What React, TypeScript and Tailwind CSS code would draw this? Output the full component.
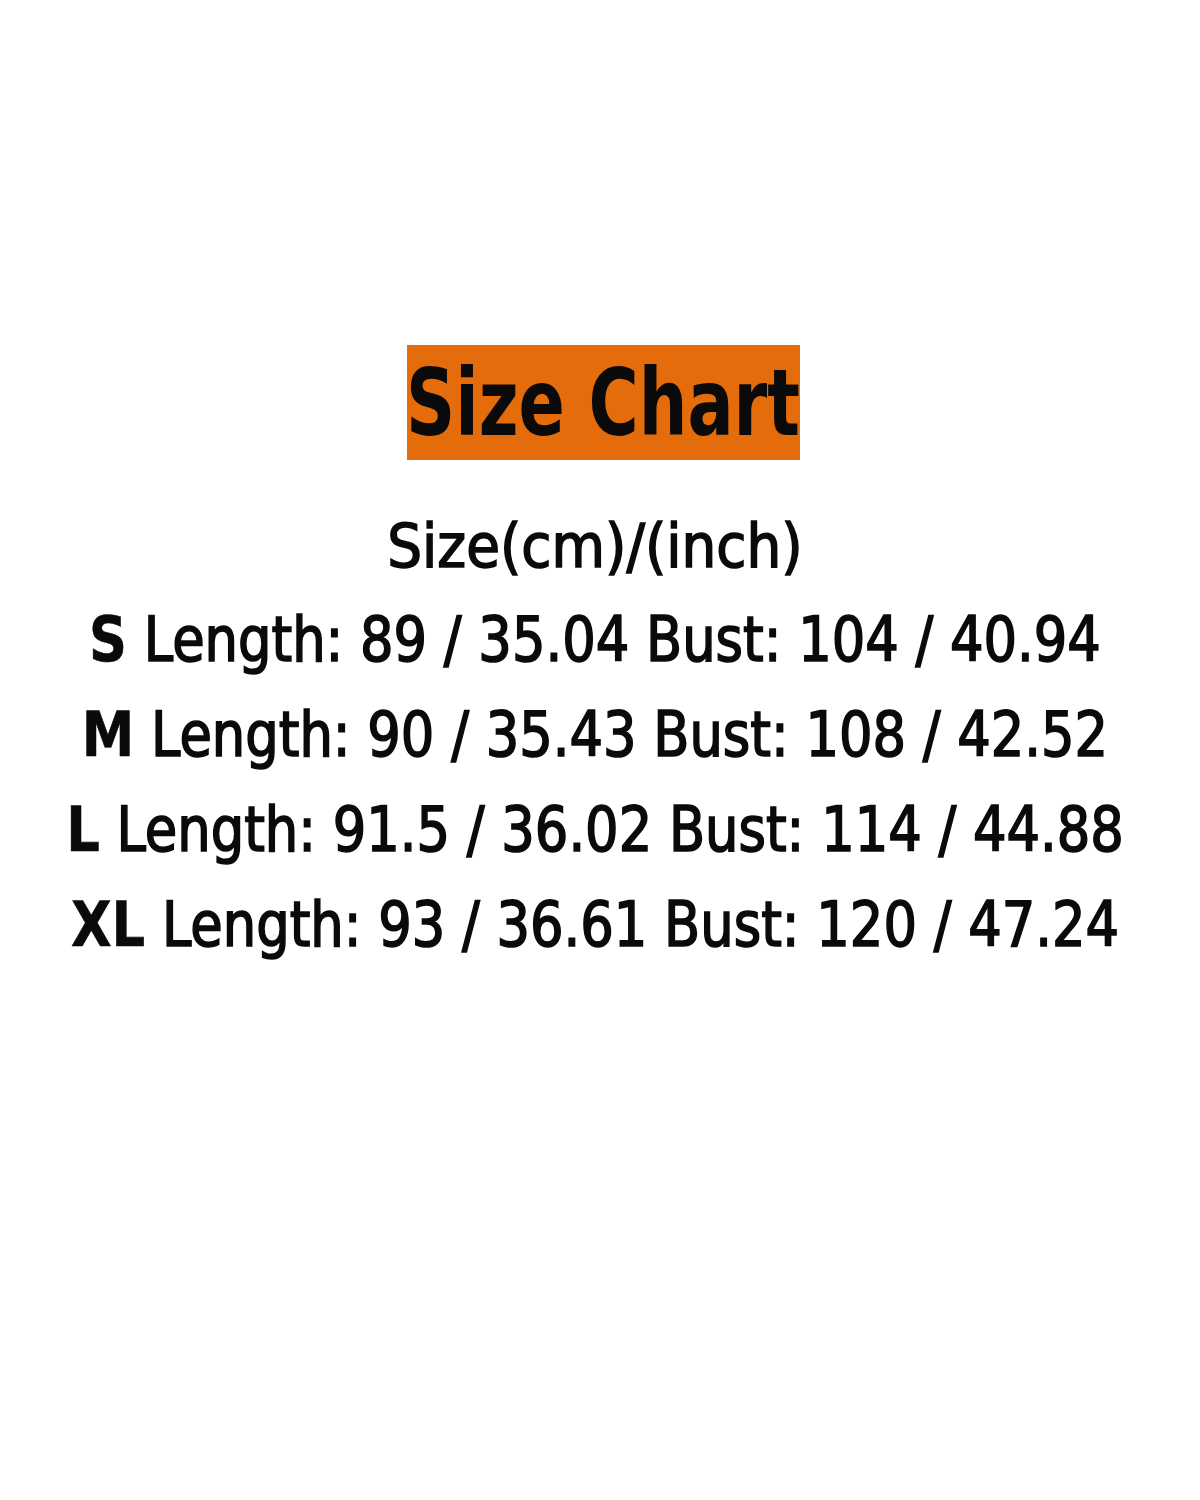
import React from "react";

const rows = [
  ["S", "Length: 89 / 35.04 Bust: 104 / 40.94"],
  ["M", "Length: 90 / 35.43 Bust: 108 / 42.52"],
  ["L", "Length: 91.5 / 36.02 Bust: 114 / 44.88"],
  ["XL", "Length: 93 / 36.61 Bust: 120 / 47.24"],
];

export default function App() {
  return (
    <div
      className="w-[1200px] h-[1500px] bg-white flex flex-col items-center pt-[345px] text-[#0a0a0a]"
      style={{ fontFamily: '"DejaVu Sans Condensed", "DejaVu Sans", sans-serif' }}
    >
      <div className="ml-[6px] w-[393px] h-[115px] bg-[#e46c0a] flex items-center justify-center overflow-hidden">
        <span className="inline-block font-bold text-[76px] leading-none scale-y-[1.22] font-stretch-condensed whitespace-nowrap">
          Size Chart
        </span>
      </div>
      <div className="mt-[38px] mr-[10px] h-[95px] flex items-center justify-center">
        <span className="inline-block text-[61px] leading-none font-stretch-condensed [-webkit-text-stroke:1.5px_#0a0a0a] whitespace-nowrap">
          Size(cm)/(inch)
        </span>
      </div>
      {rows.map(([s, rest]) => (
        <div key={s} className="mr-[10px] h-[95px] flex items-center justify-center">
          <span className="inline-block text-[58.6px] leading-none scale-y-[1.05] font-stretch-condensed whitespace-nowrap [-webkit-text-stroke:1.5px_#0a0a0a]">
            <span className="font-bold [-webkit-text-stroke:0.5px_#0a0a0a]">{s}</span> {rest}
          </span>
        </div>
      ))}
    </div>
  );
}
